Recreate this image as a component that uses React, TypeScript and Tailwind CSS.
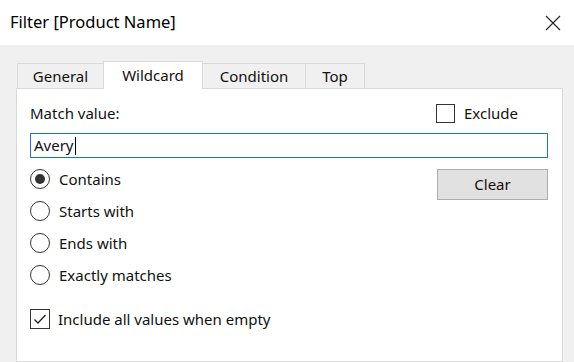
import React from "react";

const font = { fontFamily: '"Noto Sans", "Open Sans", sans-serif' };

function Radio({ label, checked }: { label: string; checked?: boolean }) {
  return (
    <div className="flex items-center h-8">
      <div className="w-[20px] h-[20px] rounded-full border border-[#333] bg-white flex items-center justify-center">
        {checked && <div className="w-[10px] h-[10px] rounded-full bg-[#333]" />}
      </div>
      <span className="ml-[9px] text-[15px] text-[#111]">{label}</span>
    </div>
  );
}

export default function App() {
  const tabs = [
    { name: "General", w: "w-[87px]" },
    { name: "Wildcard", w: "w-[100px]", active: true },
    { name: "Condition", w: "w-[104px]" },
    { name: "Top", w: "w-[60px]" },
  ];
  return (
    <div className="w-[574px] h-[362px] overflow-hidden bg-[#f0f0f0] flex flex-col" style={font}>
      <div className="h-[45px] bg-white flex items-center justify-between pl-[10px] pr-[13px] shrink-0">
        <span className="text-[16.5px] text-black">Filter [Product Name]</span>
        <svg width="16" height="16" viewBox="0 0 16 16" className="text-[#222]">
          <path d="M1 1 L15 15 M15 1 L1 15" stroke="currentColor" strokeWidth="1.1" fill="none" />
        </svg>
      </div>
      <div className="pl-[16px] pr-[11px] pt-[16px] flex-1 flex flex-col">
        <div className="flex items-end h-[27px] pl-[1px]">
          {tabs.map((t) =>
            t.active ? (
              <div
                key={t.name}
                className={`${t.w} h-[28px] bg-white border border-b-0 border-[#d9d9d9] -ml-px flex items-center justify-center text-[15px] text-[#111] -mb-px relative z-10`}
              >
                {t.name}
              </div>
            ) : (
              <div
                key={t.name}
                className={`${t.w} h-[25px] bg-[#f0f0f0] border border-b-0 border-[#d9d9d9] -ml-px first:ml-0 flex items-center justify-center text-[15px] text-[#111]`}
              >
                {t.name}
              </div>
            )
          )}
        </div>
        <div className="flex-1 bg-white border border-[#d9d9d9] pl-[13px] pr-[14px] pt-[13px]">
          <div className="flex items-center justify-between h-[22px]">
            <span className="text-[15px] text-[#111]">Match value:</span>
            <div className="flex items-center w-[112px]">
              <div className="w-[19px] h-[19px] border border-[#333] bg-white" />
              <span className="ml-[9px] text-[15px] text-[#111]">Exclude</span>
            </div>
          </div>
          <div className="mt-[9px] h-[25px] border border-[#1979c9] flex items-center pl-[3px] text-[15px] text-[#111]">
            Avery<span className="w-px h-[18px] bg-black ml-px" />
          </div>
          <div className="flex justify-between mt-[5px]">
            <div className="flex flex-col">
              <Radio label="Contains" checked />
              <Radio label="Starts with" />
              <Radio label="Ends with" />
              <Radio label="Exactly matches" />
            </div>
            <button className="mt-[6px] w-[111px] h-[31px] bg-[#e1e1e1] border border-[#adadad] text-[15px] text-[#111]">
              Clear
            </button>
          </div>
          <div className="flex items-center mt-[18px] h-[20px]">
            <div className="w-[20px] h-[20px] border border-[#333] bg-white flex items-center justify-center">
              <svg width="14" height="12" viewBox="0 0 14 12">
                <path d="M1.5 6.5 L5 10 L12.5 2" stroke="#222" strokeWidth="1.3" fill="none" />
              </svg>
            </div>
            <span className="ml-[8px] text-[15px] text-[#111]">Include all values when empty</span>
          </div>
        </div>
      </div>
    </div>
  );
}
